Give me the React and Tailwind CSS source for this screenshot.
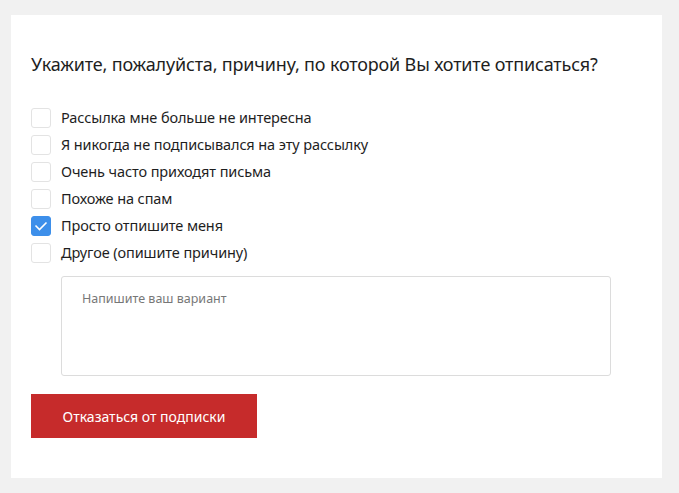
import React, { useState } from "react";

const reasons = [
  "Рассылка мне больше не интересна",
  "Я никогда не подписывался на эту рассылку",
  "Очень часто приходят письма",
  "Похоже на спам",
  "Просто отпишите меня",
  "Другое (опишите причину)",
];

const Checkbox = ({ checked, onClick }) => (
  <button
    type="button"
    onClick={onClick}
    className={
      checked
        ? "w-5 h-5 shrink-0 rounded-[3px] bg-[#3d8fea] border border-[#3d8fea] flex items-center justify-center"
        : "w-5 h-5 shrink-0 rounded-[3px] bg-white border border-[#e3e3e3]"
    }
  >
    {checked && (
      <svg width="14" height="10" viewBox="0 0 14 10" fill="none">
        <path d="M1.5 4.5 L5.5 8.5 L12.5 1.5" stroke="white" strokeWidth="1.6" />
      </svg>
    )}
  </button>
);

export default function App() {
  const [selected, setSelected] = useState(4);

  return (
    <div
      className="min-h-screen bg-[#f1f1f1] pt-[15px] pl-[11px] pb-[15px]"
      style={{ fontFamily: '"Noto Sans", Arial, sans-serif' }}
    >
      <div className="w-[651px] h-[463px] bg-white pt-[37px] px-5">
        <h1 className="text-[18px] leading-6 text-[#1e1e1e] tracking-[-0.17px]">
          Укажите, пожалуйста, причину, по которой Вы хотите отписаться?
        </h1>

        <div className="mt-[32px] flex flex-col gap-[7px]">
          {reasons.map((r, i) => (
            <label key={r} className="flex items-center gap-[10px] h-5 cursor-pointer">
              <Checkbox checked={selected === i} onClick={() => setSelected(i)} />
              <span className="text-[14.5px] text-[#1e1e1e] tracking-[-0.1px]">{r}</span>
            </label>
          ))}
        </div>

        <div className="ml-[30px] mt-[13px] w-[550px] h-[100px] border border-[#dcdcdc] rounded-[3px] px-5 pt-[8px]">
          <span className="text-[12.5px] text-[#777]">Напишите ваш вариант</span>
        </div>

        <button className="mt-[18px] w-[226px] h-[44px] bg-[#c62b2b] text-white text-[14px] flex items-center justify-center">
          Отказаться от подписки
        </button>
      </div>
    </div>
  );
}
